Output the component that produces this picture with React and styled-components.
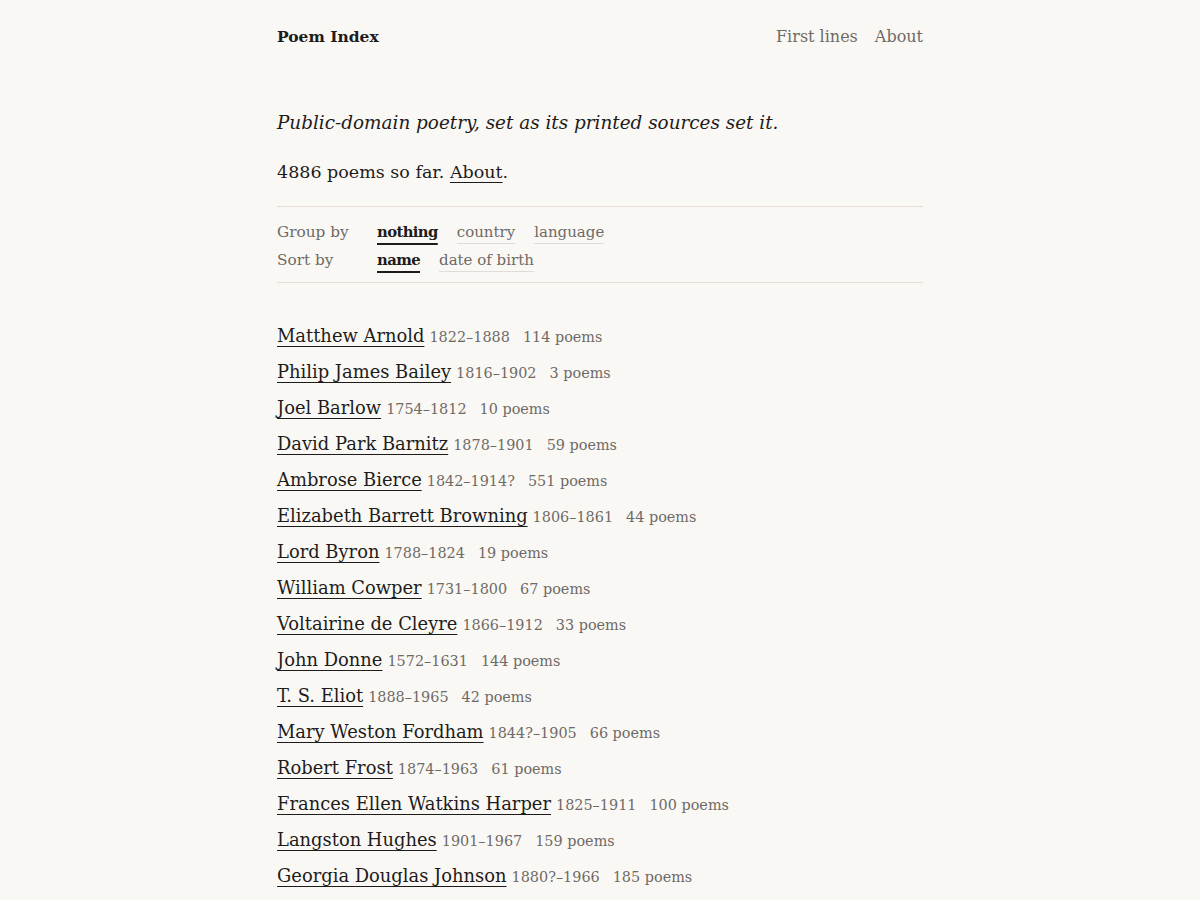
import React from 'react';
import styled, { createGlobalStyle } from 'styled-components';

const poets = [
  { name: 'Matthew Arnold', dates: '1822–1888', poems: 114 },
  { name: 'Philip James Bailey', dates: '1816–1902', poems: 3 },
  { name: 'Joel Barlow', dates: '1754–1812', poems: 10 },
  { name: 'David Park Barnitz', dates: '1878–1901', poems: 59 },
  { name: 'Ambrose Bierce', dates: '1842–1914?', poems: 551 },
  { name: 'Elizabeth Barrett Browning', dates: '1806–1861', poems: 44 },
  { name: 'Lord Byron', dates: '1788–1824', poems: 19 },
  { name: 'William Cowper', dates: '1731–1800', poems: 67 },
  { name: 'Voltairine de Cleyre', dates: '1866–1912', poems: 33 },
  { name: 'John Donne', dates: '1572–1631', poems: 144 },
  { name: 'T. S. Eliot', dates: '1888–1965', poems: 42 },
  { name: 'Mary Weston Fordham', dates: '1844?–1905', poems: 66 },
  { name: 'Robert Frost', dates: '1874–1963', poems: 61 },
  { name: 'Frances Ellen Watkins Harper', dates: '1825–1911', poems: 100 },
  { name: 'Langston Hughes', dates: '1901–1967', poems: 159 },
  { name: 'Georgia Douglas Johnson', dates: '1880?–1966', poems: 185 },
];

const GlobalStyle = createGlobalStyle`
  html, body {
    margin: 0;
    padding: 0;
    background: #faf8f5;
  }
  body {
    font-family: "DejaVu Serif", "Liberation Serif", serif;
    color: #1e1c1a;
  }
`;

const Page = styled.div`
  width: 646px;
  margin: 0 auto;
`;

const Header = styled.header`
  display: flex;
  justify-content: space-between;
  align-items: center;
  padding-top: 25px;
  line-height: 24px;
`;

const Brand = styled.a`
  font-size: 15.5px;
  font-weight: 700;
  color: #1e1c1a;
  text-decoration: none;
`;

const Nav = styled.nav`
  display: flex;
  gap: 17px;
`;

const NavLink = styled.a`
  font-size: 16px;
  color: #6e6a66;
  text-decoration: none;
`;

const Tagline = styled.p`
  margin: 59px 0 0;
  font-size: 18.4px;
  font-style: italic;
  line-height: 30px;
`;

const Lead = styled.p`
  margin: 19px 0 0;
  font-size: 17.5px;
  line-height: 30px;

  a {
    color: inherit;
    text-decoration: underline;
    text-decoration-thickness: 1px;
    text-underline-offset: 4px;
  }
`;

const Controls = styled.div`
  margin-top: 19px;
  padding: 11px 0 8px;
  border-top: 1px solid #e8dcd8;
  border-bottom: 1px solid #e8dcd8;
  display: grid;
  grid-template-columns: 100px 1fr;
  line-height: 28px;
`;

const Label = styled.span`
  font-size: 15.3px;
  color: #6e6a66;
`;

const Options = styled.div`
  display: flex;
  gap: 19px;
`;

const Option = styled.a`
  font-size: ${p => (p.$active ? '14.8px' : '15px')};
  font-weight: ${p => (p.$active ? 700 : 400)};
  letter-spacing: ${p => (p.$active ? '-0.6px' : '0')};
  color: ${p => (p.$active ? '#1e1c1a' : '#6e6a66')};
  text-decoration: underline;
  text-decoration-color: ${p => (p.$active ? '#1e1c1a' : '#e2dcd8')};
  text-decoration-thickness: ${p => (p.$active ? '2px' : '1px')};
  text-underline-offset: 6px;
`;

const List = styled.ul`
  list-style: none;
  margin: 36px 0 0;
  padding: 0;
`;

const Row = styled.li`
  line-height: 36px;
  white-space: nowrap;
`;

const Name = styled.a`
  font-size: 17.9px;
  line-height: 1;
  color: #1e1c1a;
  text-decoration: underline;
  text-decoration-thickness: 1px;
  text-underline-offset: 4px;
`;

const Meta = styled.span`
  font-size: 14.4px;
  line-height: 1;
  color: #6e6a66;
  margin-left: ${p => p.$gap}px;
`;

export default function App() {
  return (
    <>
      <GlobalStyle />
      <Page>
        <Header>
          <Brand href="#">Poem Index</Brand>
          <Nav>
            <NavLink href="#">First lines</NavLink>
            <NavLink href="#">About</NavLink>
          </Nav>
        </Header>

        <Tagline>Public-domain poetry, set as its printed sources set it.</Tagline>
        <Lead>
          4886 poems so far. <a href="#">About</a>.
        </Lead>

        <Controls>
          <Label>Group by</Label>
          <Options>
            <Option href="#" $active>nothing</Option>
            <Option href="#">country</Option>
            <Option href="#">language</Option>
          </Options>
          <Label>Sort by</Label>
          <Options>
            <Option href="#" $active>name</Option>
            <Option href="#">date of birth</Option>
          </Options>
        </Controls>

        <List>
          {poets.map(p => (
            <Row key={p.name}>
              <Name href="#">{p.name}</Name>
              <Meta $gap={5}>{p.dates}</Meta>
              <Meta $gap={13}>{p.poems} poems</Meta>
            </Row>
          ))}
        </List>
      </Page>
    </>
  );
}
